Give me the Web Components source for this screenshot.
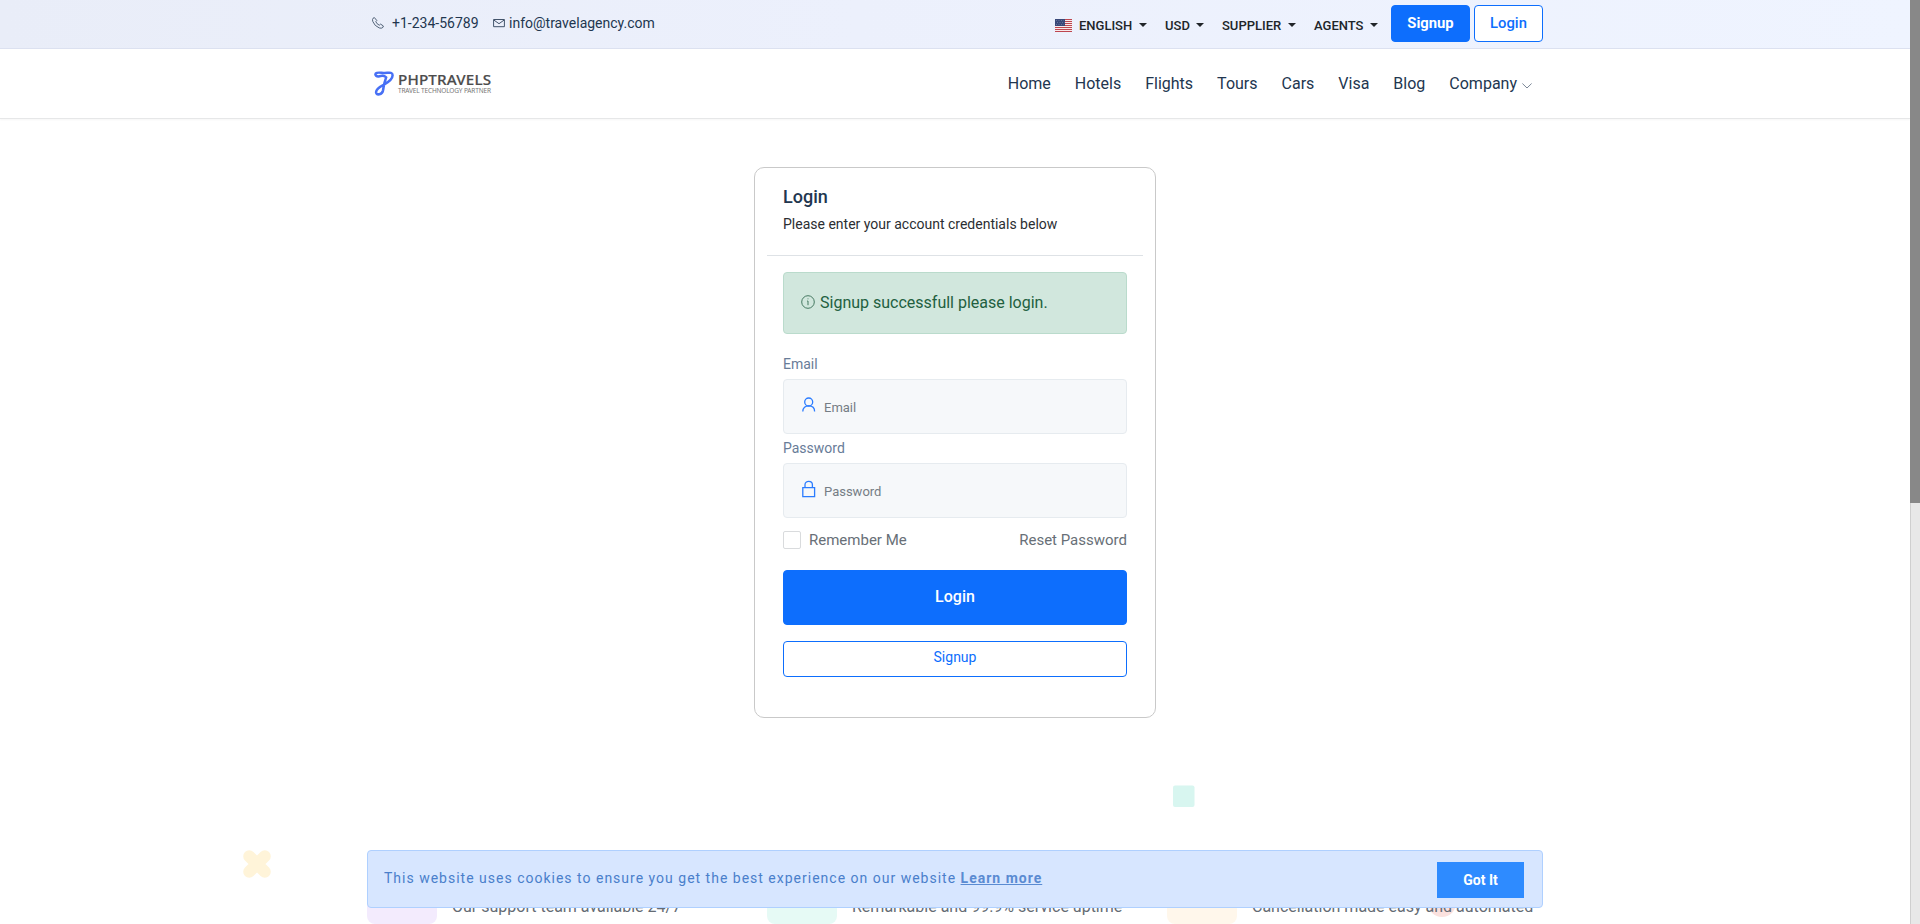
<!DOCTYPE html>
<html lang="en">
<head>
<meta charset="utf-8">
<title>Login - PHPTRAVELS</title>
<style>
html,body{margin:0;height:100%;overflow:hidden;background:#fff}
body{font-family:Roboto,sans-serif;font-size:16px;color:#22364f}
</style>
</head>
<body>
<travel-app></travel-app>
<script>
const make=(name,html)=>{
  const t=document.createElement('template');
  t.innerHTML='<style>*{box-sizing:border-box}svg{display:block;flex:none}</style>'+html;
  customElements.define(name,class extends HTMLElement{
    constructor(){super();this.attachShadow({mode:'open'}).append(t.content.cloneNode(true));}
    connectedCallback(){
      const w=this.getAttribute('w');
      if(w)this.style.width=w+'px';
    }
  });
};

make('menu-drop',`<style>:host{display:flex;align-items:center;justify-content:space-between;height:16px;font-size:13px;font-weight:500;color:#212529;white-space:nowrap}i{width:0;height:0;border:4px solid transparent;border-top-color:#212529;border-bottom:0;margin-top:-1px}</style><slot></slot><i></i>`);

make('app-button',`<style>:host{display:flex;align-items:center;justify-content:center;flex:none;box-sizing:border-box;border:1px solid #0d6efd;border-radius:4px;background:#0d6efd;color:#fff;font-weight:500}:host([outline]){background:#fff;color:#0d6efd}</style><slot></slot>`);

make('top-bar',`<style>
:host{display:flex;justify-content:center;height:49px;box-sizing:border-box;border-bottom:1px solid #dce1f0;background:linear-gradient(90deg,#e9edf8 0%,#ecf0fc 45%,#eff4ff 100%)}
.in{width:1176px;display:flex;justify-content:space-between}
.l{display:flex;align-items:center;height:46px;font-size:14px;padding-left:5px;font-weight:400}
.ph{margin-right:8px}.mail{margin:0 4px 0 14px}
.r{display:flex;align-items:flex-start;padding-top:5px}
.menus{display:flex;padding-top:12px;margin-right:13px}
menu-drop+menu-drop{margin-left:18px}
.flag{margin:14px 7px 0 0}
app-button{height:37px;font-size:14.8px;padding-bottom:1px}app-button+app-button{margin-left:4px}
</style><div class="in"><div class="l">
<svg class="ph" width="12" height="12" viewBox="0 0 12 12" fill="none" stroke="#42536a" stroke-width=".9"><path d="M1 1.3 2.4.6 4.8 3.5 3.8 4.7Q4.7 7 7.3 8.2L8.6 7.1 11.4 9 10.9 10.4Q9.5 11.8 7.2 10.9 2.5 9 .8 4.5 0 2.3 1 1.3Z"/></svg>
<text-fit w="87">+1-234-56789</text-fit>
<svg class="mail" width="12" height="10" viewBox="0 0 12 10" fill="none" stroke="#42536a"><path d="M.6 1.5h10.8v7.2H.6zM.8 2 6 5.7 11.2 2"/></svg>
<text-fit>info@travelagency.com</text-fit></div>
<div class="r"><svg class="flag" width="17" height="13" viewBox="0 0 17 13"><path fill="#f8e9eb" d="M0 0h17v13H0z"/><path stroke="#bd4650" d="M0 .5h17M0 2.5h17M0 4.5h17M0 6.5h17M0 8.5h17M0 10.5h17M0 12.5h17"/><path fill="#394879" d="M0 0h10v7H0z"/><path stroke="#8591b0" stroke-width=".6" stroke-dasharray="1 1.5" d="M1 1.5h8M2 3.5h8M1 5.5h8"/></svg>
<div class="menus"><menu-drop w="68">ENGLISH</menu-drop><menu-drop w="39">USD</menu-drop><menu-drop w="74">SUPPLIER</menu-drop><menu-drop w="64">AGENTS</menu-drop></div>
<app-button w="79" style="font-weight:700">Signup</app-button><app-button w="69" outline>Login</app-button></div></div>`);

make('text-fit',`<style>:host{display:block;white-space:nowrap}</style><slot></slot>`);

make('brand-logo',`<style>:host{display:flex;align-items:center;height:28px;font-family:"Noto Sans",sans-serif;color:#4c4c4c}.t{margin-left:4px;white-space:nowrap}.a{font-size:15.2px;line-height:15px;font-weight:500;letter-spacing:.16px;-webkit-text-stroke:.2px #4c4c4c}.b{font-size:6.5px;line-height:8px;color:#777;letter-spacing:-.16px}</style>
<svg width="20" height="25" viewBox="0 0 20 25" fill="none" stroke="#4770f5" stroke-width="2.5" stroke-linecap="round" stroke-linejoin="round"><path d="M5.5 5.2C2.5 6 .7 4 1.8 2.4 3.3.8 7.3 2 10.7 2 14.3 2 18.6.6 18.6 4.2 18.7 8 14.5 11.2 10 13.6 5.4 16 1.8 18.6 2.1 21.4 2.8 24.6 8 23.8 9 19.6 9.6 16.6 9.6 14.5 10.6 11.5 11.4 9 11.8 7.5 12.2 6.4 10.5 4.6 8 4.6 5.5 5.2"/></svg>
<div class="t"><div class="a">PHPTRAVELS</div><div class="b">TRAVEL TECHNOLOGY PARTNER</div></div>`);

make('site-nav',`<style>
:host{display:flex;justify-content:center;height:70px;box-sizing:border-box;border-bottom:1px solid #e6e7e8;box-shadow:0 1px 2px #0000000a;background:#fff}
.in{width:1176px;display:flex;justify-content:space-between;padding:0 11px 0 7px}
brand-logo{margin-top:20px}
nav{display:flex;align-items:center;height:69px;gap:24px;font-size:16px;white-space:nowrap}
.c{display:flex;align-items:center;gap:5px}.c svg{margin-top:4px}
</style><div class="in"><brand-logo></brand-logo><nav><span>Home</span><span>Hotels</span><span>Flights</span><span>Tours</span><span>Cars</span><span>Visa</span><span>Blog</span><span class="c">Company<svg width="10" height="6" viewBox="0 0 10 6" fill="none" stroke="#7b8797"><path d="M.4.5 5 5 9.6.5"/></svg></span></nav></div>`);

make('form-field',`<style>
:host{display:block}
label{display:block;font-size:14px;line-height:20px;height:25px;color:#687c98}
.box{display:flex;align-items:center;height:55px;border:1px solid #e6ebef;border-radius:4px;background:#f6f8fa;padding-left:18px;font-size:13px;color:#757d85}
.ic{width:14px;height:18px;margin:-4px 8px 0 0}.v{padding-top:2px}
</style><label><slot name="label"></slot></label><div class="box"><div class="ic"><slot name="icon"></slot></div><span class="v"><slot></slot></span></div>`);

make('login-card',`<style>
:host{display:flex;flex-direction:column;width:402px;height:551px;box-sizing:border-box;border:1px solid #c9c9c9;border-radius:10px;background:#fff}
header{margin:0 12px;height:88px;border-bottom:1px solid #dee2e6;padding:18px 16px 0}
h1{font-size:18px;line-height:22px;font-weight:500;margin:0}
p{font-size:14px;line-height:20px;margin:6px 0 0;color:#2b2e32}
.body{padding:16px 28px 0}
.alert{height:62px;border:1px solid #badbcc;border-radius:4px;background:#d1e7dd;color:#22603f;display:flex;align-items:center;padding:0 0 2px 17px;gap:5px;font-size:16px;margin-bottom:20px}
form-field+form-field{margin-top:4px}
.row{display:flex;align-items:center;height:18px;margin-top:13px;font-size:15px;color:#686f77}
.row i{width:18px;height:18px;border:1px solid #d9dbdd;border-radius:2px;margin-right:8px}
.row span:last-child{margin-left:auto}
.login{height:55px;margin-top:21px;font-size:16px;padding-bottom:3px}
.sign{height:36px;margin-top:16px;font-size:14px;font-weight:400;padding-bottom:4px}
</style><header><h1>Login</h1><p>Please enter your account credentials below</p></header>
<div class="body"><div class="alert"><svg width="14" height="14" viewBox="0 0 14 14" fill="none" stroke="#356c52" stroke-width=".9"><circle cx="7" cy="7" r="6.3"/><path d="M6.2 6h.8v4.2M6.6 3.8h.8"/></svg>Signup successfull please login.</div>
<form-field><span slot="label">Email</span><svg slot="icon" width="14" height="18" viewBox="0 0 14 18" style="display:block" fill="none" stroke="#2b7cff" stroke-width="1.3"><circle cx="6.7" cy="6" r="4"/><path d="M.8 15.5C.8 11.5 3.4 9.8 6.7 9.8S12.6 11.5 12.6 15.5"/></svg>Email</form-field>
<form-field><span slot="label">Password</span><svg slot="icon" width="14" height="18" viewBox="0 0 14 18" style="display:block" fill="none" stroke="#2b7cff" stroke-width="1.3"><path d="M.8 7.7h11.8v9H.8zM3 7.7V4.8C3 .1 10.4.1 10.4 4.8V7.7"/></svg>Password</form-field>
<div class="row"><i></i><span>Remember Me</span><span>Reset Password</span></div>
<app-button class="login">Login</app-button><app-button outline class="sign">Signup</app-button></div>`);

make('feature-item',`<style>:host{display:flex;align-items:flex-end;width:400px;height:70px;font-size:16px;line-height:18px;color:#646b74;white-space:nowrap}i{width:70px;height:70px;border-radius:8px;background:var(--tint);margin-right:15px;flex:none}span{padding-bottom:8px}</style><i></i><span><slot></slot></span>`);

make('cookie-bar',`<style>
:host{display:flex;align-items:center;justify-content:space-between;box-sizing:border-box;width:1176px;height:58px;border:1px solid #afd0ff;border-radius:4px;background:#d7e6ff;padding:0 18px 0 16px;font-size:14px;color:#4a7fcb;letter-spacing:1px}
.m{padding-bottom:3px;white-space:nowrap}b{font-weight:700;text-decoration:underline;color:#5a8bd2}
.g{display:flex;align-items:center;justify-content:center;width:87px;height:36px;background:#2e8bff;color:#fff;font-weight:700;font-size:14px;letter-spacing:0;margin-top:1px}
</style><span class="m">This website uses cookies to ensure you get the best experience on our website <b>Learn more</b></span><span class="g">Got It</span>`);

make('page-scrollbar',`<style>:host{display:block;width:10px;height:924px;flex:none;background:#e8e8e8;border-left:1px solid #cfcfcf;box-sizing:border-box}div{height:503px;background:#888;margin-left:-1px}</style><div></div>`);

make('travel-app',`<style>
:host{display:flex;height:924px;overflow:hidden;position:relative}
main{width:1910px;display:flex;flex-direction:column}
login-card{margin:48px auto 0}
.features{width:1176px;margin:136px auto 0;display:flex}
.features feature-item{flex:none}
cookie-bar{position:absolute;left:367px;top:850px}
.d{position:absolute}
</style><main><top-bar></top-bar><site-nav></site-nav><login-card></login-card>
<svg class="d" style="left:243px;top:850px" width="28" height="28" viewBox="0 0 28 28"><path d="M6.2 6.2 21.8 21.8M21.8 6.2 6.2 21.8" stroke="#fff4d9" stroke-width="12" stroke-linecap="round"/></svg>
<svg class="d" style="left:1173px;top:785px" width="22" height="22"><rect y=".5" width="21.5" height="21.5" rx="2" fill="#d8f6f0"/></svg>
<svg class="d" style="left:1428px;top:889px" width="28" height="28"><circle cx="14" cy="14" r="14" fill="#fbe1de"/></svg>
<section class="features"><feature-item style="--tint:#f3ebfd">Our support team available 24/7</feature-item><feature-item style="--tint:#e6faf5">Remarkable and 99.9% service uptime</feature-item><feature-item style="--tint:#fff7eb;position:relative">Cancellation made easy and automated</feature-item></section>
<cookie-bar></cookie-bar></main><page-scrollbar></page-scrollbar>`);
</script>
</body>
</html>
